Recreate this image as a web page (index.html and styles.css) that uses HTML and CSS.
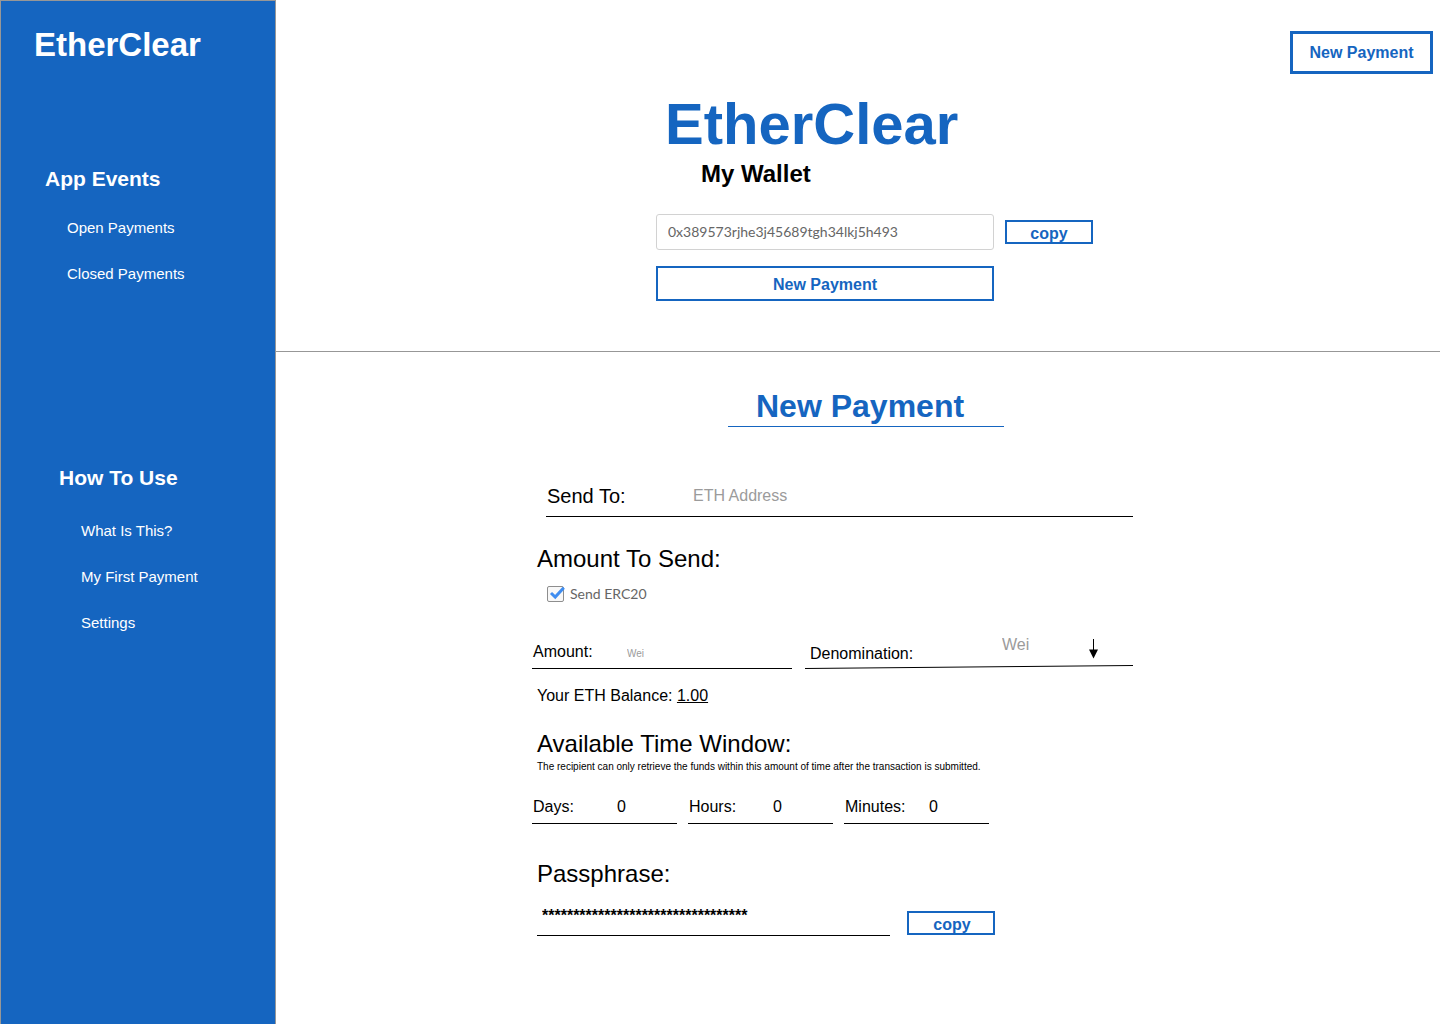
FILE: index.html
```html
<!DOCTYPE html>
<html lang="en">
<head>
<meta charset="utf-8">
<meta name="viewport" content="width=device-width, initial-scale=1">
<title>EtherClear</title>
<link rel="stylesheet" href="styles.css">
</head>
<body>
<div class="app">
  <aside class="sidebar">
    <div class="sidebar-brand">EtherClear</div>
    <nav class="menu" aria-labelledby="menu-events">
      <h2 class="menu-title" id="menu-events">App Events</h2>
      <ul class="menu-list">
        <li><a href="#open">Open Payments</a></li>
        <li><a href="#closed">Closed Payments</a></li>
      </ul>
    </nav>
    <nav class="menu menu-help" aria-labelledby="menu-help">
      <h2 class="menu-title" id="menu-help">How To Use</h2>
      <ul class="menu-list">
        <li><a href="#about">What Is This?</a></li>
        <li><a href="#first">My First Payment</a></li>
        <li><a href="#settings">Settings</a></li>
      </ul>
    </nav>
  </aside>

  <main class="main">
    <section class="wallet">
      <div class="topbar">
        <button type="button" class="btn btn-top">New Payment</button>
      </div>
      <div class="wallet-body">
        <h1 class="logo">EtherClear</h1>
        <h2 class="wallet-title"><label for="address">My Wallet</label></h2>
        <div class="wallet-row">
          <input class="address" id="address" type="text" value="0x389573rjhe3j45689tgh34lkj5h493" readonly>
          <button type="button" class="btn btn-copy">copy</button>
        </div>
        <button type="button" class="btn btn-wide">New Payment</button>
      </div>
    </section>

    <section class="payment">
      <form class="form">
        <h2 class="form-title">New Payment</h2>

        <div class="field send-to">
          <label for="to">Send To:</label>
          <input id="to" type="text" placeholder="ETH Address">
        </div>

        <h3 class="heading">Amount To Send:</h3>
        <div class="check">
          <span class="check-box">
            <input id="erc20" type="checkbox" checked>
            <svg class="check-mark" width="18" height="17" viewBox="0 0 18 17" aria-hidden="true"><path d="M4 7L8.200 11L16.800 1.800" fill="none" stroke="#3f8df0" stroke-width="3"/></svg>
          </span>
          <label for="erc20">Send ERC20</label>
        </div>

        <div class="amount-row">
          <div class="field amount">
            <label for="amount">Amount:</label>
            <input id="amount" type="text" placeholder="Wei">
          </div>
          <div class="denomination">
            <div class="denomination-body">
              <label for="unit">Denomination:</label>
              <select id="unit"><option>Wei</option></select>
              <svg class="arrow" width="10" height="22" viewBox="0 0 10 22" aria-hidden="true"><path d="M4.500 0V12" stroke="#000"/><path d="M0 10.500H9L4.500 19.500Z"/></svg>
            </div>
            <svg class="slope" viewBox="0 0 328 4" preserveAspectRatio="none" aria-hidden="true"><path d="M0 3.500L328 0.500" stroke="#000"/></svg>
          </div>
        </div>
        <p class="balance">Your ETH Balance: <span class="balance-value">1.00</span></p>

        <h3 class="heading heading-time">Available Time Window:</h3>
        <p class="hint">The recipient can only retrieve the funds within this amount of time after the transaction is submitted.</p>
        <div class="time-row">
          <div class="field time"><label for="days">Days:</label><input id="days" type="text" value="0"></div>
          <div class="field time"><label for="hours">Hours:</label><input id="hours" type="text" value="0"></div>
          <div class="field time"><label for="minutes">Minutes:</label><input id="minutes" type="text" value="0"></div>
        </div>

        <h3 class="heading heading-pass"><label for="pass">Passphrase:</label></h3>
        <div class="pass-row">
          <input class="pass" id="pass" type="text" value="*********************************" readonly>
          <button type="button" class="btn btn-copy">copy</button>
        </div>
      </form>
    </section>
  </main>
</div>
</body>
</html>
```
FILE: styles.css
```css
:root {
  --blue: #1565c0;
  --grey: #979797;
}

* {
  box-sizing: border-box;
}

body,
h1,
h2,
h3,
p,
ul {
  margin: 0;
  padding: 0;
}

body {
  font: 16px/20px "Liberation Sans", Helvetica, Arial, sans-serif;
  color: #000;
  background: #fff;
}

input,
select,
button {
  font: inherit;
  color: inherit;
  margin: 0;
  padding: 0;
  border: 0;
  border-radius: 0;
  background: none;
  min-width: 0;
}

.app {
  display: flex;
  min-height: 100vh;
}

/* Sidebar */
.sidebar {
  flex: 0 0 276px;
  padding: 24px 16px 24px 33px;
  color: #fff;
  background: var(--blue);
  border: 1px solid var(--grey);
  border-bottom: 0;
}

.sidebar-brand {
  font-size: 33px;
  line-height: 40px;
  font-weight: bold;
}

.menu {
  margin-top: 102px;
  padding-left: 11px;
}

.menu-help {
  margin-top: 182px;
  padding-left: 25px;
}

.menu-title {
  font-size: 21px;
  line-height: 24px;
  font-weight: bold;
}

.menu-list {
  display: grid;
  gap: 26px;
  margin-top: 27px;
  padding-left: 22px;
  list-style: none;
  font-size: 15px;
}

.menu-help .menu-list {
  margin-top: 31px;
}

.menu-list a {
  display: block;
  color: inherit;
  text-decoration: none;
}

/* Buttons */
.btn {
  border: 2px solid var(--blue);
  background: #fff;
  color: var(--blue);
  font-weight: bold;
  text-align: center;
}

.btn-top {
  width: 143px;
  height: 43px;
  border-width: 3px;
}

.btn-copy {
  flex: none;
  width: 88px;
  height: 24px;
}

.btn-wide {
  display: block;
  width: 338px;
  height: 35px;
  margin-top: 16px;
}

.btn-copy,
.btn-wide {
  padding-top: 2px;
}

/* Wallet */
.main {
  flex: 1;
  min-width: 0;
}

.wallet {
  padding-bottom: 50px;
  border-bottom: 1px solid var(--grey);
}

.topbar {
  display: flex;
  justify-content: flex-end;
  padding: 31px 7px 0 0;
}

.wallet-body {
  width: 470px;
  margin: 18px auto 0;
  padding-left: 33px;
}

.logo {
  padding-left: 9px;
  font-size: 58px;
  line-height: 64px;
  color: var(--blue);
}

.wallet-title {
  margin-top: 4px;
  padding-left: 45px;
  font-size: 24px;
  line-height: 28px;
}

.wallet-row {
  display: flex;
  align-items: center;
  gap: 11px;
  margin-top: 26px;
}

.address {
  flex: 1;
  height: 36px;
  padding: 0 11px 2px;
  border: 1px solid #d2d2d2;
  border-radius: 3px;
  font: 14px/20px Lato, sans-serif;
  color: #666;
}

/* Payment form */
.form {
  width: 652px;
  margin: 0 auto;
  padding: 34px 51px 40px 0;
}

.form-title {
  width: 276px;
  margin-left: 196px;
  padding-left: 28px;
  border-bottom: 1px solid var(--blue);
  font-size: 32px;
  line-height: 40px;
  color: var(--blue);
}

.field {
  display: flex;
  align-items: center;
  height: 34px;
  border-bottom: 1px solid #000;
}

.field input {
  flex: 1;
}

.field label {
  flex: none;
  padding-left: 1px;
}

::placeholder {
  color: #9b9b9b;
  opacity: 1;
}

.send-to {
  height: 41px;
  margin: 49px 0 0 14px;
}

.send-to label {
  width: 147px;
  font-size: 20px;
}

.heading {
  margin-top: 27px;
  padding-left: 5px;
  font-size: 24px;
  line-height: 30px;
  font-weight: normal;
}

.check {
  display: flex;
  align-items: center;
  gap: 6px;
  margin-top: 10px;
  padding-left: 15px;
  font: 14px/20px Lato, sans-serif;
  color: #666;
}

.check-box {
  position: relative;
  width: 17px;
  height: 16px;
}

.check-box input {
  display: block;
  appearance: none;
  width: 17px;
  height: 16px;
  border: 1px solid #8e8e8e;
  border-radius: 2px;
  background: #f8f8f8;
}

.check-mark {
  position: absolute;
  left: 0;
  top: 0;
  visibility: hidden;
  pointer-events: none;
}

.check-box input:checked + .check-mark {
  visibility: visible;
}

.amount-row {
  display: grid;
  grid-template-columns: 260px 1fr;
  gap: 13px;
  margin-top: 31px;
}

.amount label {
  width: 95px;
}

.amount input {
  padding-top: 4px;
  font-size: 10px;
}

.denomination-body {
  display: flex;
  align-items: center;
  height: 30px;
  padding-left: 5px;
}

.denomination-body label {
  align-self: flex-end;
  width: 192px;
  line-height: 22px;
}

.denomination-body select {
  align-self: flex-start;
  appearance: none;
  width: 87px;
  color: #9b9b9b;
}

.slope {
  display: block;
  width: 100%;
  height: 4px;
}

.balance {
  margin-top: 17px;
  padding-left: 5px;
}

.balance-value {
  text-decoration: underline;
}

.heading-time {
  margin-top: 23px;
}

.hint {
  padding-left: 5px;
  font-size: 10px;
  line-height: 15px;
}

.time-row {
  display: grid;
  grid-template-columns: repeat(3, 145px);
  gap: 11px;
  margin-top: 16px;
}

.time label {
  width: 85px;
}

.heading-pass {
  margin-top: 35px;
}

.pass-row {
  display: flex;
  align-items: center;
  gap: 17px;
  margin-top: 9px;
  padding-left: 5px;
}

.pass {
  width: 353px;
  height: 38px;
  padding: 0 0 2px 5px;
  border-bottom: 1px solid #000;
  font-weight: bold;
}

.pass-row .btn-copy {
  margin-top: 12px;
  padding-left: 2px;
}
```
